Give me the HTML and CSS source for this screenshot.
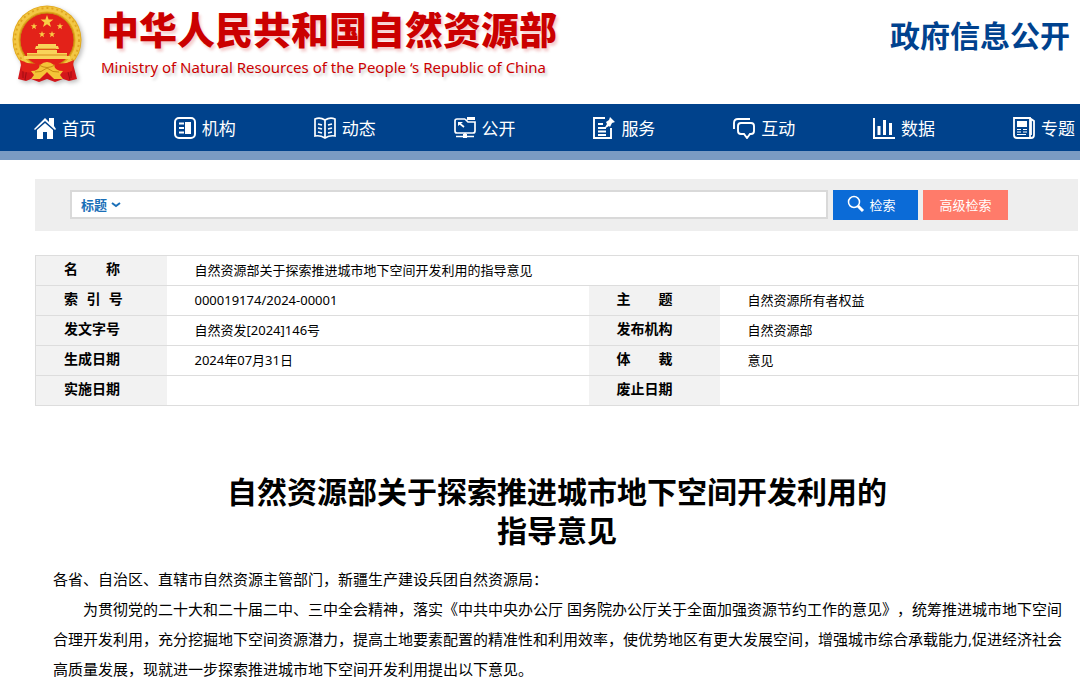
FILE: index.html
```html
<!DOCTYPE html>
<html lang="zh-CN">
<head>
    <meta charset="UTF-8">
    <meta name="viewport" content="width=device-width, initial-scale=1.0">
    <title>自然资源部关于探索推进城市地下空间开发利用的指导意见</title>
    <link rel="stylesheet" href="styles.css">
</head>
<body>
    <header class="header">
        <a class="brand" href="#">
            <svg class="emblem" viewBox="0 0 76 80" aria-hidden="true">
                <path d="M13 56 L9 75 L17 77 L22 75 L30 78 L38 75 L46 78 L54 75 L60 77 L68 75 L63 56 Z" fill="#d3161b"/>
                <path d="M14 61v13M18 64l-2 12M62 61v13M58 64l3 12" stroke="#9e0d12" fill="none"/>
                <circle cx="38" cy="36" r="34.500" fill="#e2a91c"/>
                <circle cx="38" cy="36" r="31" fill="none" stroke="#f2c744" stroke-width="5"/>
                <circle cx="38" cy="36" r="32" fill="none" stroke="#e0a520" stroke-width="2" stroke-dasharray="2 3"/>
                <circle cx="38" cy="36" r="27" fill="#e32219" stroke="#c98a12"/>
                <path fill="#f9ce45" d="M38 11l1.600 4.500h4.800l-3.800 2.900 1.400 4.600-4-2.700-4 2.700 1.400-4.600-3.800-2.900h4.800z"/>
                <path fill="#f9ce45" d="M25 19l.8 2.300h2.500l-2 1.500.7 2.400-2-1.400-2 1.400.7-2.400-2-1.500h2.500zM51 19l.8 2.300h2.500l-2 1.500.7 2.400-2-1.400-2 1.400.7-2.400-2-1.500h2.500zM33 27l.8 2.300h2.500l-2 1.500.7 2.400-2-1.400-2 1.400.7-2.400-2-1.500h2.500zM43 27l.8 2.300h2.500l-2 1.500.7 2.400-2-1.400-2 1.400.7-2.400-2-1.500h2.500z"/>
                <path fill="#f9d35a" d="M29 40h18v2h2l1 3H26l1-3h2zM28 46h20v3h10v3h3v3H15v-3h3v-3h10z"/>
                <path d="M29 45h18M18 51h40" stroke="#d98a1a" fill="none"/>
                <path d="M11 56q9 5 18 3l9-2 9 2q9 2 18-3l-2 11q-8 3-16 0l-9 7-9-7q-8 3-16 0z" fill="#e32219"/>
                <path d="M22 67q8 0 9-6 7-6 14 0 1 6 9 6l-3 4 3 4h-9l-7-7-7 7h-9l3-4z" fill="#f4c437"/>
                <path d="M30 61q8 5 16 0M26 68q6 1 12-4 6 5 12 4" stroke="#c98a12" fill="none"/>
                <path d="M29 77l9-8 9 8-9-3z" fill="#d3161b"/>
            </svg>
            <span class="brand-text">
                <span class="brand-cn">中华人民共和国自然资源部</span>
                <span class="brand-en">Ministry of Natural Resources of the People ‘s Republic of China</span>
            </span>
        </a>
        <h2 class="section-name">政府信息公开</h2>
    </header>

    <nav class="nav">
        <a href="#">
            <svg viewBox="0 0 22 22"><path fill="#fff" d="M11 1l4 4V1h5v8l2 3-1 1L11 4 1 13l-1-1zM11 6l8 7v9h-6v-7H9v7H3v-9z"/></svg>
            首页
        </a>
        <a href="#">
            <svg viewBox="0 0 22 22"><rect x="1" y="1" width="20" height="20" rx="4" fill="none" stroke="#fff" stroke-width="2"/><path d="M5 6.500h5M5 11h5M5 15.500h5" stroke="#fff" stroke-width="2"/><path fill="#fff" d="M11 5h6v12h-6z"/></svg>
            机构
        </a>
        <a href="#">
            <svg viewBox="0 0 22 22"><path d="M11 3Q6 0 1 2v17q5-1 10 2 5-3 10-2V2q-5-2-10 1v18M4 7l4 1M4 11l4 1M4 15l4 1M18 7l-4 1M18 11l-4 1M18 15l-4 1" fill="none" stroke="#fff" stroke-width="1.700"/></svg>
            动态
        </a>
        <a href="#">
            <svg viewBox="0 0 22 22"><path d="M11 2H3Q1 2 1 4v10q0 2 2 2h16q2 0 2-2V5h-7l-3-3M11 16v3M2 19.500h18M5 6l5 4" fill="none" stroke="#fff" stroke-width="1.700"/><path fill="#fff" d="M13 0h8v3h-8zM4 5h5L4 9zM9 17h4v4H9z"/></svg>
            公开
        </a>
        <a href="#">
            <svg viewBox="0 0 22 22"><path d="M12 1H1v20h17V11M5 7h5M5 11h8M5 14.500h8M5 18h8" fill="none" stroke="#fff" stroke-width="1.900"/><path fill="#fff" d="M17 0l5 5-3 1-2 4-1-1-5 3 3-5-1-2 3-2z"/></svg>
            服务
        </a>
        <a href="#">
            <svg viewBox="0 0 22 22"><path d="M1 12V6q0-4 4-4h12M8 6h10q3 0 3 3v5q0 3-3 3h-1l-3 4-3-4H8q-3 0-3-3V9q0-3 3-3z" fill="none" stroke="#fff" stroke-width="1.900"/></svg>
            互动
        </a>
        <a href="#">
            <svg viewBox="0 0 22 22"><path d="M1 1v20h21" fill="none" stroke="#fff" stroke-width="2"/><path d="M6 9v9M11.500 3v15M17.500 6v12" stroke="#fff" stroke-width="3"/></svg>
            数据
        </a>
        <a href="#">
            <svg viewBox="0 0 22 22"><path d="M17 20V1H1v17q0 3 3 3h14q3 0 3-3V4l-3-2v16" fill="none" stroke="#fff" stroke-width="1.800"/><path fill="#fff" d="M4 4h10v6H4z"/><path d="M4 12.500h4M4 15h4M4 17.500h9M10 12.500h4M10 15h4" stroke="#fff" stroke-width="1.200"/></svg>
            专题
        </a>
    </nav>

    <main class="main">
        <form class="search">
            <div class="search-box">
                <select class="search-field" aria-label="检索范围">
                    <option>标题</option>
                </select>
                <svg class="arrow" viewBox="0 0 10 8" aria-hidden="true"><path d="M1 2l4 3 4-3" fill="none" stroke="#1a6fb8" stroke-width="2"/></svg>
                <input type="text" class="search-input" aria-label="检索词">
            </div>
            <button type="submit" class="btn">
                <svg viewBox="0 0 18 18"><circle cx="7" cy="7" r="5.500" fill="none" stroke="#fff" stroke-width="1.500"/><path d="M11 11l5 5" stroke="#fff" stroke-width="3"/></svg>
                检索
            </button>
            <button type="button" class="btn btn-advanced">高级检索</button>
        </form>

        <table class="info">
            <colgroup>
                <col class="col-label">
                <col class="col-wide">
                <col class="col-label">
                <col>
            </colgroup>
            <tr>
                <th scope="row">名&emsp;&emsp;称</th>
                <td colspan="3">自然资源部关于探索推进城市地下空间开发利用的指导意见</td>
            </tr>
            <tr>
                <th scope="row">索&ensp;&hairsp;引&ensp;&hairsp;号</th>
                <td>000019174/2024-00001</td>
                <th scope="row">主&emsp;&emsp;题</th>
                <td>自然资源所有者权益</td>
            </tr>
            <tr>
                <th scope="row">发文字号</th>
                <td>自然资发[2024]146号</td>
                <th scope="row">发布机构</th>
                <td>自然资源部</td>
            </tr>
            <tr>
                <th scope="row">生成日期</th>
                <td>2024年07月31日</td>
                <th scope="row">体&emsp;&emsp;裁</th>
                <td>意见</td>
            </tr>
            <tr>
                <th scope="row">实施日期</th>
                <td></td>
                <th scope="row">废止日期</th>
                <td></td>
            </tr>
        </table>

        <article class="article">
            <h1>自然资源部关于探索推进城市地下空间开发利用的<br>指导意见</h1>
            <p>各省、自治区、直辖市自然资源主管部门，新疆生产建设兵团自然资源局：</p>
            <p class="indent">为贯彻党的二十大和二十届二中、三中全会精神，落实《中共中央办公厅 国务院办公厅关于全面加强资源节约工作的意见》，统筹推进城市地下空间合理开发利用，充分挖掘地下空间资源潜力，提高土地要素配置的精准性和利用效率，使优势地区有更大发展空间，增强城市综合承载能力,促进经济社会高质量发展，现就进一步探索推进城市地下空间开发利用提出以下意见。</p>
        </article>
    </main>
</body>
</html>
```
FILE: styles.css
```css
* {
    box-sizing: border-box;
    margin: 0;
    padding: 0;
}
body {
    font-family: "Noto Sans", "Noto Sans CJK SC", sans-serif;
    background-color: #fff;
    color: #000;
    text-spacing-trim: space-all;
}
a {
    color: inherit;
    text-decoration: none;
}
.header {
    display: flex;
    justify-content: space-between;
    align-items: flex-start;
    padding: 4px 10px 0 9px;
    height: 104px;
}
.brand {
    display: flex;
    gap: 16px;
    color: #cb0000;
}
.emblem {
    width: 76px;
    height: 80px;
    filter: drop-shadow(2px 2px 2px rgba(0,0,0,0.25));
}
.brand-text {
    display: flex;
    flex-direction: column;
    white-space: nowrap;
}
.brand-cn {
    font-size: 38px;
    font-weight: 900;
    line-height: 50px;
    text-shadow: 2px 3px 3px rgba(203,0,0,0.2);
}
.brand-en {
    font-size: 15px;
    line-height: 26px;
    text-shadow: 2px 3px 3px rgba(0,0,0,0.2);
}
.section-name {
    font-size: 30px;
    line-height: 40px;
    padding-top: 12px;
    color: #00428e;
    white-space: nowrap;
}
.nav {
    display: flex;
    justify-content: space-between;
    padding: 0 5px 0 34px;
    background-color: #00428c;
    border-bottom: 9px solid #7a9bc3;
}
.nav a {
    display: flex;
    align-items: center;
    gap: 6px;
    height: 47px;
    color: #fff;
    font-size: 17px;
    white-space: nowrap;
}
.nav svg {
    width: 22px;
    height: 22px;
}
.main {
    padding: 19px 1px 0 35px;
}
.search {
    display: flex;
    gap: 5px;
    padding: 11px 70px 11px 35px;
    margin-right: 1px;
    background-color: #eee;
}
.search-box {
    flex: 1;
    display: flex;
    align-items: center;
    height: 29px;
    padding-left: 9px;
    border: 2px solid #d9d9d9;
    background-color: #fff;
}
.search-field {
    appearance: none;
    border: none;
    background: none;
    color: #1a6fb8;
    font-family: inherit;
    font-size: 13px;
    font-weight: bold;
}
.arrow {
    width: 10px;
    height: 8px;
    margin-left: 3px;
}
.search-input {
    flex: 1;
    height: 25px;
    padding: 0 8px;
    border: none;
    outline: none;
    font-family: inherit;
    font-size: 13px;
}
.btn {
    display: flex;
    justify-content: center;
    align-items: center;
    gap: 4px;
    width: 85px;
    height: 30px;
    padding: 0 8px 2px 0;
    border: none;
    background-color: #0b6bd7;
    color: #fff;
    font-family: inherit;
    font-size: 13px;
    cursor: pointer;
}
.btn svg {
    width: 18px;
    height: 18px;
}
.btn-advanced {
    padding-right: 0;
    background-color: #ff7b6a;
}
.info {
    width: 100%;
    margin-top: 24px;
    border-collapse: collapse;
    table-layout: fixed;
    border: 1px solid #ddd;
}
.col-label {
    width: 131px;
}
.col-wide {
    width: 422px;
}
.info tr {
    height: 30px;
    border-top: 1px solid #ddd;
}
.info th, .info td {
    padding: 0 0 2px 28px;
    text-align: left;
    line-height: 20px;
}
.info th {
    padding-bottom: 3px;
    background-color: #f2f2f2;
    font-size: 14px;
}
.info td {
    font-size: 13px;
}
.article {
    padding: 66px 12px 0 18px;
}
.article h1 {
    margin-bottom: 14px;
    padding-right: 6px;
    font-size: 30px;
    line-height: 39px;
    text-align: center;
}
.article p {
    font-size: 15px;
    line-height: 30px;
}
.article .indent {
    text-indent: 2em;
}
```
